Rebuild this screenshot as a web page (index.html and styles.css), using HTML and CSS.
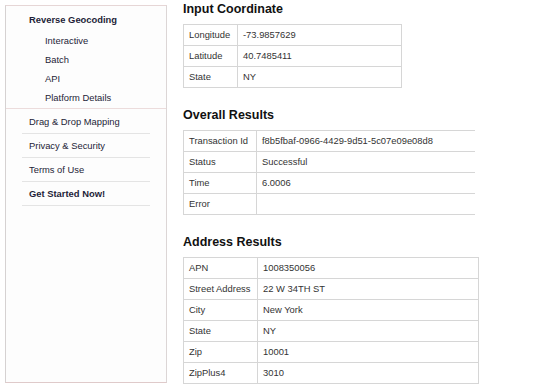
FILE: index.html
```html
<!DOCTYPE html>
<html>
<head>
<meta charset="utf-8">
<link rel="stylesheet" href="styles.css">
</head>
<body>
<aside class="sidebar">
  <div class="nav-top">
    <div class="nav-title">Reverse Geocoding</div>
    <ul class="sub-list">
      <li>Interactive</li>
      <li>Batch</li>
      <li>API</li>
      <li>Platform Details</li>
    </ul>
  </div>
  <ul class="nav-list">
    <li>Drag &amp; Drop Mapping</li>
    <li>Privacy &amp; Security</li>
    <li>Terms of Use</li>
    <li class="strong">Get Started Now!</li>
  </ul>
</aside>
<main class="main">
  <section class="section">
    <h2 class="heading">Input Coordinate</h2>
    <table class="tbl tbl-input">
      <tr><td class="lbl">Longitude</td><td>-73.9857629</td></tr>
      <tr><td class="lbl">Latitude</td><td>40.7485411</td></tr>
      <tr><td class="lbl">State</td><td>NY</td></tr>
    </table>
  </section>
  <section class="section">
    <h2 class="heading">Overall Results</h2>
    <table class="tbl tbl-overall">
      <tr><td class="lbl">Transaction Id</td><td>f8b5fbaf-0966-4429-9d51-5c07e09e08d8</td></tr>
      <tr><td class="lbl">Status</td><td>Successful</td></tr>
      <tr><td class="lbl">Time</td><td>6.0006</td></tr>
      <tr><td class="lbl">Error</td><td></td></tr>
    </table>
  </section>
  <section class="section">
    <h2 class="heading">Address Results</h2>
    <table class="tbl tbl-address">
      <tr><td class="lbl">APN</td><td>1008350056</td></tr>
      <tr><td class="lbl">Street Address</td><td>22 W 34TH ST</td></tr>
      <tr><td class="lbl">City</td><td>New York</td></tr>
      <tr><td class="lbl">State</td><td>NY</td></tr>
      <tr><td class="lbl">Zip</td><td>10001</td></tr>
      <tr><td class="lbl">ZipPlus4</td><td>3010</td></tr>
    </table>
  </section>
</main>
</body>
</html>
```
FILE: styles.css
```css
html, body {
  margin: 0;
  padding: 0;
  background: #ffffff;
}
body {
  display: flex;
  align-items: flex-start;
  font-family: "Liberation Sans", Arial, sans-serif;
  font-size: 9.4px;
  color: #333;
}
.sidebar {
  box-sizing: border-box;
  margin: 5px 0 0 5px;
  width: 162px;
  height: 378px;
  background: #fdfdfd;
  border-top: 1px solid #e6d6d6;
  border-bottom: 1px solid #dfcaca;
  border-left: 1px solid #d6d2d2;
  border-right: 1px solid #dcd6d6;
  color: #1e1e38;
}
.nav-top {
  padding-top: 4px;
  border-bottom: 1px solid #ecdcdc;
  padding-bottom: 1px;
}
.nav-title {
  font-weight: bold;
  line-height: 19px;
  padding-left: 23px;
}
.sub-list {
  list-style: none;
  margin: 2px 0 0 0;
  padding: 0 0 0 39px;
}
.sub-list li {
  line-height: 19px;
}
.nav-list {
  list-style: none;
  margin: 0 0 0 16px;
  padding: 1px 0 0 0;
  width: 128px;
}
.nav-list li {
  line-height: 23px;
  padding-left: 7px;
  border-bottom: 1px solid #e4e4e4;
}
.nav-list li.strong {
  font-weight: bold;
}
.main {
  margin-left: 16px;
  padding-top: 2px;
}
.section {
  margin-bottom: 20px;
}
.heading {
  margin: 0 0 7px 0;
  font-size: 12.5px;
  line-height: 15px;
  font-weight: bold;
  color: #111;
}
.tbl {
  border-collapse: separate;
  border-spacing: 0;
  border-bottom: 1px solid #d6d6d6;
  border-right: 1px solid #d6d6d6;
}
.tbl td {
  border-top: 1px solid #d6d6d6;
  border-left: 1px solid #d6d6d6;
  line-height: 20px;
  padding: 0 0 0 5px;
  white-space: nowrap;
  vertical-align: middle;
}
.tbl-input { width: 219px; }
.tbl-input .lbl { width: 48px; }
.tbl-overall { width: 292px; border-right: none; }
.tbl-overall .lbl { width: 67px; }
.tbl-address { width: 296px; }
.tbl-address .lbl { width: 68px; }
```
